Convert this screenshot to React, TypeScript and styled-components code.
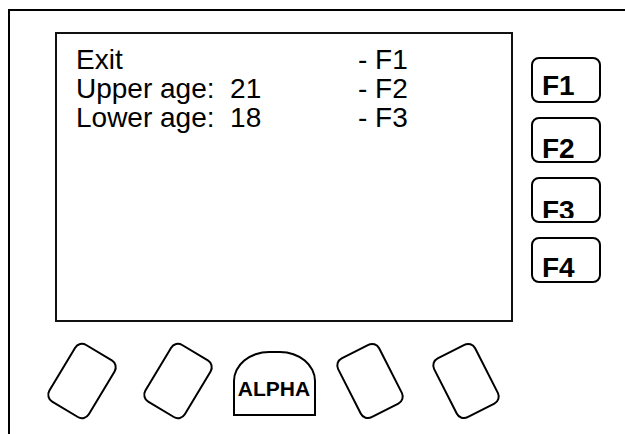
import React from "react";
import styled, { css, createGlobalStyle } from "styled-components";

const Global = createGlobalStyle`
  html, body { margin: 0; padding: 0; background: #fff; overflow: hidden; }
  body { font-family: "Liberation Sans", Arial, sans-serif; color: #000; }
`;

const Frame = styled.div`
  box-sizing: border-box;
  margin: 9px 0 0 8px;
  width: 619px;
  height: 427px;
  border: 2px solid #000;
  padding: 21px 0 0 45px;
`;

const TopRow = styled.div`
  display: flex;
  align-items: flex-start;
  gap: 18px;
`;

const Screen = styled.div`
  box-sizing: border-box;
  width: 458px;
  height: 290px;
  border: 2px solid #111;
  padding: 11px 0 0 19px;
  display: grid;
  grid-template-columns: 282px auto;
  grid-auto-rows: 29px;
  align-content: start;
  font-size: 28px;
  line-height: 29px;
`;

const Cell = styled.div`
  white-space: pre;
`;

const KeyColumn = styled.div`
  display: flex;
  flex-direction: column;
  gap: 14px;
  padding-top: 25px;
`;

const FKey = styled.div<{ $top: number }>`
  box-sizing: border-box;
  width: 70px;
  height: 46px;
  border: 2px solid #000;
  border-radius: 8px;
  padding: ${(p) => p.$top}px 0 0 9px;
  font-weight: bold;
  font-size: 28px;
  line-height: 24px;
`;

const FLabel = styled.span<{ $clip?: boolean }>`
  display: inline-block;
  ${(p) =>
    p.$clip &&
    css`
      height: 19px;
      overflow: hidden;
    `}
`;

const BottomRow = styled.div`
  display: flex;
  margin: 19px 0 0 -21px;
`;

const Slot = styled.div`
  width: 96px;
  height: 80px;
  display: flex;
  align-items: center;
  justify-content: center;
`;

const SoftKey = styled.div<{ $angle: number }>`
  box-sizing: border-box;
  width: 48px;
  height: 68px;
  border: 2px solid #000;
  border-radius: 9px;
  transform: rotate(${(p) => p.$angle}deg);
`;

const Alpha = styled.div`
  box-sizing: border-box;
  width: 83px;
  height: 65px;
  margin-top: 5px;
  border: 2px solid #000;
  border-radius: 36px 36px 0 0 / 30px 30px 0 0;
  display: flex;
  align-items: center;
  justify-content: center;
  padding-top: 10px;
  font-weight: bold;
  font-size: 21px;
  line-height: 1;
`;

const rows: [string, string][] = [
  ["Exit", "- F1"],
  ["Upper age:  21", "- F2"],
  ["Lower age:  18", "- F3"],
];

const fkeys = [
  { label: "F1", top: 15 },
  { label: "F2", top: 18 },
  { label: "F3", top: 18, clip: true },
  { label: "F4", top: 17 },
];

export default function App() {
  return (
    <>
      <Global />
      <Frame>
        <TopRow>
          <Screen>
            {rows.map(([a, b]) => (
              <React.Fragment key={a}>
                <Cell>{a}</Cell>
                <Cell>{b}</Cell>
              </React.Fragment>
            ))}
          </Screen>
          <KeyColumn>
            {fkeys.map((k) => (
              <FKey key={k.label} $top={k.top}>
                <FLabel $clip={k.clip}>{k.label}</FLabel>
              </FKey>
            ))}
          </KeyColumn>
        </TopRow>
        <BottomRow>
          <Slot><SoftKey $angle={31} /></Slot>
          <Slot><SoftKey $angle={31} /></Slot>
          <Slot><Alpha>ALPHA</Alpha></Slot>
          <Slot><SoftKey $angle={-27} /></Slot>
          <Slot><SoftKey $angle={-27} /></Slot>
        </BottomRow>
      </Frame>
    </>
  );
}
